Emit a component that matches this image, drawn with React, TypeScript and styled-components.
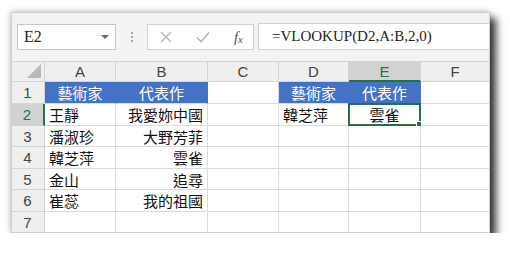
import React from 'react';
import styled, { createGlobalStyle } from 'styled-components';

const GlobalStyle = createGlobalStyle`
  body {
    margin: 0;
    background: #ffffff;
    font-family: "Noto Sans CJK TC", "Noto Sans", sans-serif;
  }
`;

const COLS = [34, 71, 92, 71, 70, 72, 69];
const ROWS = [21, 22, 22, 21, 22, 21, 22, 21];
const LETTERS = ['A', 'B', 'C', 'D', 'E', 'F'];

type Cell = { text?: string; align?: 'left' | 'center' | 'right'; head?: boolean };

const data: Record<string, Cell> = {
  A1: { text: '藝術家', align: 'center', head: true },
  B1: { text: '代表作', align: 'center', head: true },
  D1: { text: '藝術家', align: 'center', head: true },
  E1: { text: '代表作', align: 'center', head: true },
  A2: { text: '王靜' },
  B2: { text: '我愛妳中國', align: 'right' },
  D2: { text: '韓芝萍' },
  E2: { text: '雲雀', align: 'center' },
  A3: { text: '潘淑珍' },
  B3: { text: '大野芳菲', align: 'right' },
  A4: { text: '韓芝萍' },
  B4: { text: '雲雀', align: 'right' },
  A5: { text: '金山' },
  B5: { text: '追尋', align: 'right' },
  A6: { text: '崔蕊' },
  B6: { text: '我的祖國', align: 'right' },
};

export default function App() {
  return (
    <>
      <GlobalStyle />
      <Page>
        <Frame>
          <Toolbar>
            <NameBox>
              <NameText>E2</NameText>
              <DropArrow />
            </NameBox>
            <Dots>
              <Dot />
              <Dot />
              <Dot />
            </Dots>
            <ButtonsBox>
              <svg width="14" height="14" viewBox="0 0 14 14">
                <path d="M2 2 L12 12 M12 2 L2 12" stroke="#b4b4b4" strokeWidth="1.4" />
              </svg>
              <svg width="16" height="14" viewBox="0 0 16 14">
                <path d="M2 7.5 L6 11.5 L14 2.5" stroke="#b4b4b4" strokeWidth="1.6" fill="none" />
              </svg>
              <Fx>
                f<sub>x</sub>
              </Fx>
            </ButtonsBox>
            <FormulaBox>=VLOOKUP(D2,A:B,2,0)</FormulaBox>
          </Toolbar>
          <Grid>
            <Corner>
              <svg width="14" height="14" viewBox="0 0 14 14">
                <path d="M14 0 L14 14 L0 14 Z" fill="#b9b9b9" />
              </svg>
            </Corner>
            {LETTERS.map((l) => (
              <ColHead key={l} $active={l === 'E'}>
                {l}
              </ColHead>
            ))}
            {ROWS.slice(1).map((_, ri) => {
              const r = ri + 1;
              return (
                <React.Fragment key={r}>
                  <RowHead $active={r === 2}>{r}</RowHead>
                  {LETTERS.map((l) => {
                    const c = data[l + r];
                    const selected = l === 'E' && r === 2;
                    return (
                      <GridCell key={l} $align={c?.align ?? 'left'} $head={!!c?.head}>
                        {c?.text}
                        {selected && (
                          <Selection>
                            <FillHandle />
                          </Selection>
                        )}
                      </GridCell>
                    );
                  })}
                </React.Fragment>
              );
            })}
          </Grid>
        </Frame>
      </Page>
    </>
  );
}

const Page = styled.div`
  padding: 12px 0 0 11px;
`;

const Frame = styled.div`
  width: 479px;
  height: 221px;
  border: 1px solid #cfcfcf;
  box-sizing: border-box;
  background: #ffffff;
  display: flex;
  flex-direction: column;
  overflow: hidden;
  box-shadow: 6px 6px 8px rgba(0, 0, 0, 0.8), -1px -1px 6px rgba(0, 0, 0, 0.2);
`;

const Toolbar = styled.div`
  height: 48px;
  flex-shrink: 0;
  background: #f3f3f3;
  display: flex;
  align-items: flex-start;
  padding: 11px 0 0 5px;
  box-sizing: border-box;
`;

const NameBox = styled.div`
  width: 99px;
  height: 26px;
  box-sizing: border-box;
  background: #ffffff;
  border: 1px solid #c6c6c6;
  display: flex;
  align-items: center;
  justify-content: space-between;
  padding: 0 6px 0 6px;
`;

const NameText = styled.span`
  font-family: "Liberation Serif", serif;
  font-size: 16px;
  color: #222;
`;

const DropArrow = styled.span`
  width: 0;
  height: 0;
  border-left: 4px solid transparent;
  border-right: 4px solid transparent;
  border-top: 4px solid #666;
`;

const Dots = styled.div`
  width: 31px;
  height: 26px;
  display: flex;
  flex-direction: column;
  align-items: center;
  justify-content: center;
  gap: 2px;
`;

const Dot = styled.span`
  width: 2px;
  height: 2px;
  background: #a6a6a6;
`;

const ButtonsBox = styled.div`
  width: 107px;
  height: 26px;
  box-sizing: border-box;
  background: #ffffff;
  border: 1px solid #d2d2d2;
  display: flex;
  align-items: center;
  justify-content: space-between;
  padding: 0 10px 0 11px;
`;

const Fx = styled.span`
  font-family: "Liberation Serif", serif;
  font-style: italic;
  font-size: 15px;
  color: #555;
  line-height: 1;
  sub {
    font-size: 11px;
    vertical-align: -1px;
  }
`;

const FormulaBox = styled.div`
  flex: 1;
  height: 27px;
  margin: -1px 0 0 4px;
  box-sizing: border-box;
  background: #ffffff;
  border: 1px solid #d2d2d2;
  border-right: none;
  font-family: "Liberation Serif", serif;
  font-size: 15px;
  color: #222;
  display: flex;
  align-items: center;
  padding-left: 13px;
`;

const Grid = styled.div`
  display: grid;
  grid-template-columns: ${COLS.map((c) => c + 'px').join(' ')};
  grid-template-rows: ${ROWS.map((r) => r + 'px').join(' ')};
  margin-left: -1px;
`;

const HeadBase = styled.div`
  box-sizing: border-box;
  background: #efefef;
  border-right: 1px solid #d4d4d4;
  border-bottom: 1px solid #d4d4d4;
  font-family: "Liberation Sans", sans-serif;
  font-size: 15px;
  color: #444;
  display: flex;
  align-items: center;
  justify-content: center;
`;

const Corner = styled(HeadBase)`
  border-top: 1px solid #d4d4d4;
  justify-content: flex-end;
  align-items: flex-end;
  padding: 0 3px 3px 0;
`;

const ColHead = styled(HeadBase)<{ $active: boolean }>`
  border-top: 1px solid #d4d4d4;
  background: ${({ $active }) => ($active ? '#d2d2d2' : '#efefef')};
  color: ${({ $active }) => ($active ? '#217346' : '#444')};
  border-bottom: ${({ $active }) => ($active ? '2px solid #217346' : '1px solid #d4d4d4')};
`;

const RowHead = styled(HeadBase)<{ $active: boolean }>`
  background: ${({ $active }) => ($active ? '#d2d2d2' : '#efefef')};
  color: ${({ $active }) => ($active ? '#217346' : '#444')};
  border-right: ${({ $active }) => ($active ? '2px solid #217346' : '1px solid #d4d4d4')};
`;

const GridCell = styled.div<{ $align: 'left' | 'center' | 'right'; $head: boolean }>`
  position: relative;
  box-sizing: border-box;
  border-right: 1px solid ${({ $head }) => ($head ? '#4472c4' : '#dadada')};
  border-bottom: 1px solid #dadada;
  background: ${({ $head }) => ($head ? '#4472c4' : '#ffffff')};
  color: ${({ $head }) => ($head ? '#ffffff' : '#111')};
  font-family: "Noto Sans CJK TC", sans-serif;
  font-size: 15px;
  line-height: 1;
  display: flex;
  align-items: center;
  padding: 0 4px;
  justify-content: ${({ $align }) =>
    $align === 'left' ? 'flex-start' : $align === 'right' ? 'flex-end' : 'center'};
  white-space: nowrap;
`;

const Selection = styled.div`
  position: absolute;
  left: -1px;
  top: -1px;
  right: -1px;
  bottom: -1px;
  border: 2px solid #217346;
  pointer-events: none;
`;

const FillHandle = styled.div`
  position: absolute;
  right: -4px;
  bottom: -4px;
  width: 5px;
  height: 5px;
  background: #217346;
  border: 1px solid #ffffff;
`;
